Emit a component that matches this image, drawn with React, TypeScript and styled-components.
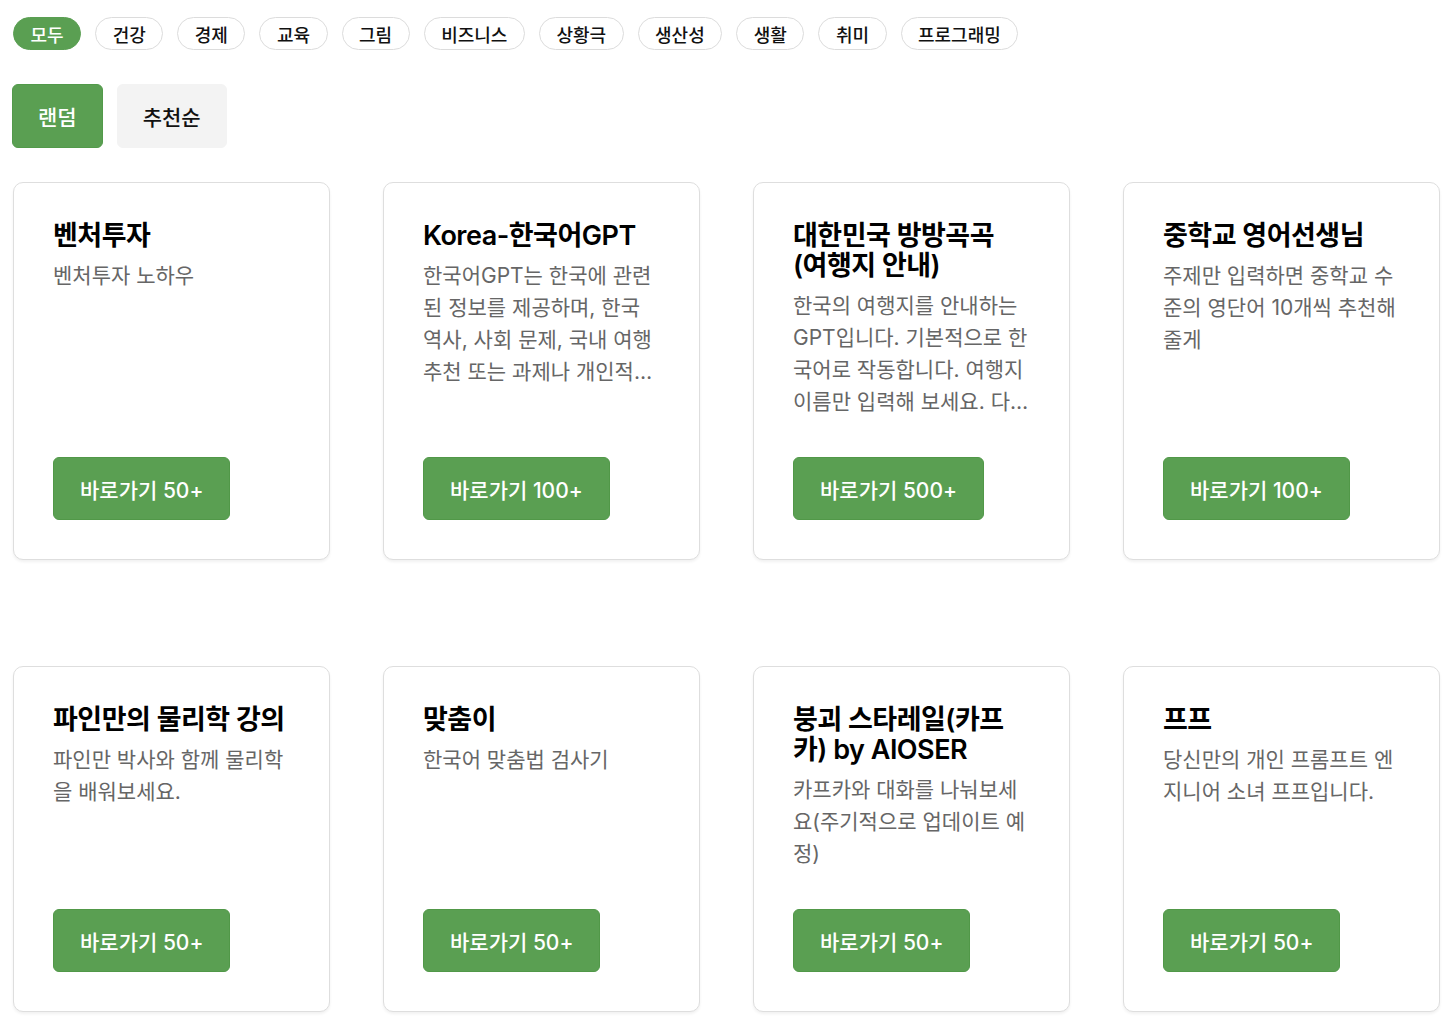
import React, { useState } from 'react';
import styled, { createGlobalStyle } from 'styled-components';

const categories = ['모두', '건강', '경제', '교육', '그림', '비즈니스', '상황극', '생산성', '생활', '취미', '프로그래밍'];

type Gpt = {
    title: string;
    desc: string;
    count: string;
};

const gpts: Gpt[] = [
    { title: '벤처투자', desc: '벤처투자 노하우', count: '50+' },
    { title: 'Korea-한국어GPT', desc: '한국어GPT는 한국에 관련된 정보를 제공하며, 한국 역사, 사회 문제, 국내 여행 추천 또는 과제나 개인적인 질문에도 답변을 제공합니다.', count: '100+' },
    { title: '대한민국 방방곡곡 (여행지 안내)', desc: '한국의 여행지를 안내하는 GPT입니다. 기본적으로 한국어로 작동합니다. 여행지 이름만 입력해 보세요. 다양한 정보를 알려드립니다.', count: '500+' },
    { title: '중학교 영어선생님', desc: '주제만 입력하면 중학교 수준의 영단어 10개씩 추천해줄게', count: '100+' },
    { title: '파인만의 물리학 강의', desc: '파인만 박사와 함께 물리학을 배워보세요.', count: '50+' },
    { title: '맞춤이', desc: '한국어 맞춤법 검사기', count: '50+' },
    { title: '붕괴 스타레일(카프카) by AIOSER', desc: '카프카와 대화를 나눠보세요(주기적으로 업데이트 예정)', count: '50+' },
    { title: '프프', desc: '당신만의 개인 프롬프트 엔지니어 소녀 프프입니다.', count: '50+' },
];

const App = () => {
    const [category, setCategory] = useState('모두');
    const [sort, setSort] = useState('random');

    return (
        <Page>
            <GlobalStyle />
            <ChipRow>
                {categories.map(c => (
                    <Chip key={c} active={c === category} onClick={() => setCategory(c)}>{c}</Chip>
                ))}
            </ChipRow>
            <SortRow>
                <SortButton active={sort === 'random'} onClick={() => setSort('random')}>랜덤</SortButton>
                <SortButton active={sort === 'best'} onClick={() => setSort('best')}>추천순</SortButton>
            </SortRow>
            <CardGrid>
                {gpts.map(g => (
                    <Card key={g.title}>
                        <Title>{g.title}</Title>
                        <Desc>{g.desc}</Desc>
                        <GoButton>바로가기 {g.count}</GoButton>
                    </Card>
                ))}
            </CardGrid>
        </Page>
    );
}


// styled-components
const GlobalStyle = createGlobalStyle`
    body {
        margin: 0;
        background: #fff;
        font-family: "Inter", "Noto Sans CJK KR", sans-serif;
        color: #111;
    }
`;

const Page = styled.div`
    padding: 17px 16px 20px 13px;
`;

const ChipRow = styled.div`
    display: flex;
    flex-wrap: wrap;
    gap: 14px;
`;

const Chip = styled.button<{ active?: boolean }>`
    height: 33px;
    padding: 0 16.5px;
    border-radius: 17px;
    border: 1px solid ${({ active }) => active ? '#5a9f52' : '#dcdcdc'};
    background: ${({ active }) => active ? '#5a9f52' : '#fff'};
    color: ${({ active }) => active ? '#fff' : '#111'};
    font-family: inherit;
    font-size: 18px;
    font-weight: 500;
    cursor: pointer;
`;

const SortRow = styled.div`
    display: flex;
    gap: 14px;
    margin: 34px 0 34px -1px;
`;

const SortButton = styled.button<{ active?: boolean }>`
    height: 64px;
    padding: 0 25px;
    border-radius: 6px;
    border: 1px solid ${({ active }) => active ? '#529a4a' : '#f3f3f3'};
    background: ${({ active }) => active ? '#5a9f52' : '#f3f3f3'};
    color: ${({ active }) => active ? '#fff' : '#111'};
    font-family: inherit;
    font-size: 21px;
    font-weight: 500;
    cursor: pointer;
`;

const CardGrid = styled.div`
    display: grid;
    grid-template-columns: repeat(4, 1fr);
    column-gap: 53px;
    row-gap: 106px;
`;

const Card = styled.div`
    display: flex;
    flex-direction: column;
    align-items: flex-start;
    padding: 38px 39px 39px;
    border: 1px solid #dedede;
    border-radius: 10px;
    background: #fff;
    box-shadow: 0 2px 3px rgba(0, 0, 0, 0.06);
`;

const Title = styled.h3`
    margin: 0 0 9px;
    font-size: 27px;
    line-height: 30px;
    font-weight: 600;
    letter-spacing: -0.5px;
    color: #000;
`;

const Desc = styled.p`
    margin: 0 0 39px;
    font-size: 21px;
    line-height: 32px;
    color: #666;
    word-break: break-all;
    display: -webkit-box;
    -webkit-line-clamp: 4;
    -webkit-box-orient: vertical;
    overflow: hidden;
`;

const GoButton = styled.button`
    margin-top: auto;
    height: 63px;
    padding: 0 26px;
    border-radius: 6px;
    border: 1px solid #519848;
    background: #5a9f52;
    color: #fff;
    font-family: inherit;
    font-size: 21px;
    font-weight: 500;
    cursor: pointer;
    flex-shrink: 0;
`;

export default App;
